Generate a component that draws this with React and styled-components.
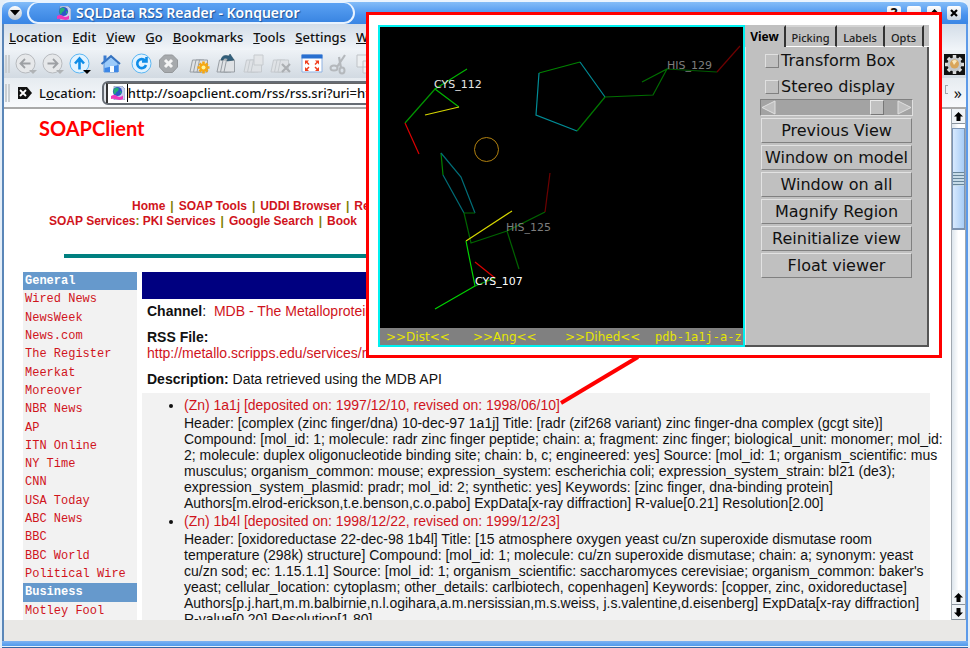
import React from "react";
import styled, { createGlobalStyle, css } from "styled-components";

const GlobalStyle = createGlobalStyle`
  * { box-sizing: border-box; }
  html, body { margin: 0; background: #fff; }
  button { font: inherit; color: inherit; padding: 0; border: 0; background: none; }
`;

const uiFont = `"Noto Sans", "Open Sans", sans-serif`;
const toolFont = `"DejaVu Sans", sans-serif`;
const pageFont = `"Liberation Sans", Arial, sans-serif`;

/* ---------- window frame ---------- */

const Window = styled.div`
  position: relative;
  display: flex;
  flex-direction: column;
  height: 100vh;
  overflow: hidden;
  padding: 0 2px;
  background: #e4eef8;
  font-family: ${uiFont};
  color: #111;
`;

const TitleBar = styled.header`
  display: flex;
  align-items: center;
  flex: none;
  height: 24px;
  padding: 0 7px 0 6px;
  border-top: 2px solid #eaf4fe;
  border-radius: 8px 8px 0 0;
  background: linear-gradient(#84bdf8, #4892ee 60%, #3a86e4);
`;

const RoundButton = styled.button`
  display: flex;
  width: 14px;
  height: 14px;
  border-radius: 50%;
  align-items: center;
  justify-content: center;
  background: linear-gradient(#fff, #b9c4cf);
`;

const TitlePill = styled.div`
  display: flex;
  align-items: center;
  gap: 5px;
  width: 328px;
  height: 22px;
  margin: 0 auto 0 5px;
  padding-left: 28px;
  border: 2px solid #e8f3ff;
  border-top-width: 1px;
  border-radius: 14px;
  background: linear-gradient(#5ba2f3, #3a85e2);
`;

const TitleText = styled.h1`
  margin: 0;
  font-size: 14px;
  line-height: 18px;
  font-weight: 600;
  color: #fff;
  text-shadow: 1px 1px 1px #1c4f96;
  white-space: nowrap;
`;

const FrameButton = styled.button`
  display: flex;
  align-items: center;
  justify-content: center;
  width: 14px;
  height: 14px;
  margin-left: 6px;
  border-radius: 2px;
  background: linear-gradient(#fff, #c9d4df);
  font-weight: 700;
  font-size: 14px;
  line-height: 14px;
`;

const FrameBody = styled.div`
  display: flex;
  flex: 1;
  min-height: 0;
  flex-direction: column;
  border-left: 2px solid #5a86b8;
  border-right: 2px solid #5d9ae8;
`;

const MenuBar = styled.nav`
  display: flex;
  flex: none;
  gap: 10px;
  height: 26px;
  padding: 0 5px;
  align-items: center;
  background: linear-gradient(#d3dde8, #f1f5f9);
`;

const MenuItem = styled.button`
  font-size: 13px;
  line-height: 18px;
  font-weight: 500;
  &::first-letter { text-decoration: underline; }
`;

const ToolBar = styled.div`
  display: flex;
  flex: none;
  align-items: center;
  gap: 5px;
  height: 28px;
  padding: 0 0 0 1px;
  background: linear-gradient(#eef2f6, #d2dae2);
`;

const Grip = styled.span`
  width: 5px;
  height: 18px;
  border-left: 2px solid #c9ced2;
  border-right: 2px solid #c9ced2;
`;

const ToolButton = styled.button`
  width: 22px;
  height: 22px;
  margin-left: ${(p) => (p.$apart ? "4px" : "0")};
  svg { display: block; }
`;

const GearBox = styled.span`
  width: 21px;
  height: 21px;
  margin: 0 1px 0 auto;
  background: #111;
  svg { display: block; }
`;

const LocationBar = styled.form`
  display: flex;
  flex: none;
  align-items: center;
  height: 29px;
  padding: 0 4px 0 1px;
  background: linear-gradient(#e6ebf0, #f8fafc);
`;

const ClearButton = styled.button`
  width: 16px;
  height: 14px;
  margin: 0 6px 0 7px;
  svg { display: block; }
`;

const LocationLabel = styled.label`
  margin-right: 6px;
  font-size: 13px;
  line-height: 18px;
  font-weight: 500;
`;

const AddressBox = styled.span`
  display: flex;
  flex: 1;
  align-items: center;
  height: 24px;
  padding: 0 4px 0 2px;
  border: 2px solid #666c74;
  border-radius: 6px;
  background: #dfe3e8;
`;

const AddressField = styled.span`
  display: flex;
  flex: 1;
  align-items: center;
  gap: 2px;
  height: 20px;
  padding-left: 3px;
  border-left: 2px solid #333;
  border-top: 1px solid #666;
  background: #fff;
`;

const AddressInput = styled.input`
  flex: 1;
  min-width: 0;
  height: 18px;
  padding: 0;
  border: 0;
  border-left: 1px solid #000;
  outline: 0;
  background: transparent;
  font: 500 13px/18px ${uiFont};
  color: #111;
`;

const AddressEnd = styled.span`
  width: 3px;
  height: 9px;
  margin: 0 6px 6px 8px;
  border: 1px solid #a0a4a8;
  border-right: 0;
`;

const MoreMark = styled.button`
  font-size: 16px;
  line-height: 18px;
`;

/* ---------- web page ---------- */

const Viewport = styled.div`
  display: flex;
  flex: 1;
  min-height: 0;
  border-top: 2px solid #a9a9a9;
  background: #fff;
`;

const Page = styled.div`
  display: flex;
  flex: 1;
  min-width: 0;
  flex-direction: column;
  overflow: hidden;
  font-family: ${pageFont};
`;

const SiteLogo = styled.div`
  margin: 7px 0 59px 35px;
  font-family: Lato, sans-serif;
  font-size: 20px;
  line-height: 24px;
  font-weight: 700;
  color: #f00;
`;

const NavLine = styled.nav`
  padding-left: ${(p) => (p.$inset ? "128px" : "45px")};
  font-size: 12px;
  line-height: 15px;
  font-weight: 700;
  color: #808000;
  white-space: nowrap;
`;

const Separator = styled.span`
  margin: 0 5px;
`;

const redLink = css`
  color: #d0141c;
  text-decoration: none;
`;

const Link = styled.a`${redLink}`;

const Rule = styled.hr`
  width: calc(100% - 120px);
  height: 4px;
  margin: 25px 60px 14px;
  border: 0;
  flex: none;
  background: #008080;
`;

const Columns = styled.div`
  display: flex;
  flex: 1;
  min-height: 0;
  gap: 5px;
  padding: 0 21px 0 19px;
`;

const Sidebar = styled.nav`
  display: grid;
  flex: none;
  width: 114px;
  grid-auto-rows: 1fr;
  background: #f2f2f2;
  font-family: "Liberation Mono", "Courier New", monospace;
  font-size: 12px;
  line-height: 18px;
`;

const SideHeading = styled.div`
  padding-left: 2px;
  background: #6699cc;
  color: #fff;
  font-weight: 700;
`;

const SideLink = styled.a`
  ${redLink}
  padding-left: 2px;
`;

const Main = styled.main`
  flex: 1;
  min-width: 0;
  font-size: 14px;
  line-height: 16px;
  color: #111;
  white-space: nowrap;
`;

const Banner = styled.div`
  height: 27px;
  background: #000080;
`;

const Field = styled.p`
  margin: 0 0 ${(p) => (p.$tight ? "6px" : "10px")} 5px;
`;

const FieldGroup = styled.div`
  padding-top: 4px;
`;

const Items = styled.ul`
  margin: 0;
  padding: 2px 0 0 42px;
  background: #f2f2f2;
`;

const ItemTitle = styled.a`
  ${redLink}
  display: block;
  line-height: 20px;
`;

/* ---------- vertical scrollbar ---------- */

const ScrollTrack = styled.div`
  display: flex;
  flex: none;
  width: 15px;
  flex-direction: column;
  border-left: 1px solid #a0a8b0;
  border-right: 1px solid #a0a8b0;
  background: linear-gradient(90deg, #dde5ec, #fff 50%);
`;

const ScrollButton = styled.button`
  display: flex;
  flex: none;
  justify-content: center;
  align-items: center;
  height: 15px;
  background: #eff3f7;
  border-bottom: 1px solid #8a949e;
`;

const ScrollThumb = styled.div`
  display: flex;
  align-items: center;
  height: 102px;
  margin-top: 4px;
  margin-bottom: auto;
  border: 1px solid #7b94b4;
  border-bottom: 2px solid #7d93b0;
  background: linear-gradient(90deg, #d8e9fd, #a8cdf6);
`;

const ThumbGrip = styled.span`
  width: 100%;
  height: 14px;
  background: repeating-linear-gradient(#66859a 0 1px, #c6dbe8 1px 3px);
`;

const StatusBar = styled.footer`
  flex: none;
  height: 21px;
  background: #e9e8e6;
`;

const BottomEdge = styled.div`
  flex: none;
  height: 7px;
  margin: 0 -2px;
  border-bottom: 1px solid #3465a4;
  background: linear-gradient(#7db2f2, #4f9aec 5px, #e8f2fc 5px);
`;

/* ---------- molecule viewer overlay ---------- */

const Callout = styled.section`
  position: absolute;
  top: 12px;
  left: 366px;
  right: 28px;
  display: flex;
  height: 346px;
  padding: 10px 10px 8px 9px;
  border: 3px solid #f00;
  background: #fff;
  font-family: ${toolFont};
`;

const Pointer = styled.svg`
  position: absolute;
  left: 556px;
  top: 355px;
`;

const Viewer = styled.div`
  display: flex;
  flex: 1;
  min-width: 0;
  flex-direction: column;
  border: 2px solid #00f0f0;
  background: #000;
`;

const Scene = styled.svg`
  display: block;
  flex: 1;
  width: 100%;
  min-height: 0;
`;

const ViewerBar = styled.div`
  display: grid;
  grid-template-columns: 87px 92px 90px 1fr;
  flex: none;
  height: 17px;
  padding-left: 6px;
  overflow: hidden;
  background: #808080;
  color: #e6e600;
  font-size: 12px;
  line-height: 18px;
  white-space: nowrap;
`;

const ViewerAction = styled.button`
  text-align: left;
`;

const ModelName = styled.span`
  font-family: "DejaVu Sans Mono", monospace;
`;

const Panel = styled.div`
  display: flex;
  flex: none;
  width: 184px;
  flex-direction: column;
  border-bottom: 2px solid #555;
  background: #c0c0c0;
`;

const Tabs = styled.div`
  display: flex;
  flex: none;
  height: 22px;
`;

const Tab = styled.button`
  width: ${(p) => p.$width}px;
  padding: 0 2px;
  font-family: ${uiFont};
  font-size: ${(p) => (p.$active ? "12px" : "11px")};
  line-height: ${(p) => (p.$active ? "20px" : "22px")};
  font-weight: ${(p) => (p.$active ? 700 : 500)};
  color: ${(p) => (p.$active ? "#000" : "#222")};
  border-right: 2px solid #333;
  border-bottom: ${(p) => (p.$active ? "0" : "1px solid #fff")};
  border-top: 2px solid ${(p) => (p.$active ? "#c0c0c0" : "#d4d4d4")};
  white-space: nowrap;
`;

const TabFill = styled.span`
  flex: 1;
  border-bottom: 1px solid #fff;
`;

const Controls = styled.div`
  display: flex;
  flex: 1;
  flex-direction: column;
  gap: 2px;
  padding: 0 15px;
  border-left: 1px solid #e4e4e4;
  border-right: 2px solid #555;
`;

const Check = styled.label`
  display: flex;
  align-items: center;
  gap: 2px;
  height: 24px;
  padding: 3px 0 0 4px;
  font-size: 16px;
  line-height: 20px;
  white-space: nowrap;
`;

const CheckInput = styled.input`
  appearance: none;
  width: 14px;
  height: 14px;
  margin: 0;
  border: 1px solid;
  border-color: #e0e0e0 #808080 #808080 #e0e0e0;
`;

const SliderRow = styled.div`
  display: flex;
  align-items: center;
  height: 17px;
  margin: 0 -1px;
  border: 1px solid;
  border-color: #808080 #e0e0e0 #e0e0e0 #808080;
  background: #a3a3a3;
  svg { display: block; }
`;

const Slider = styled.input`
  appearance: none;
  flex: 1;
  min-width: 0;
  height: 15px;
  margin: 0;
  background: transparent;
  &::-webkit-slider-thumb {
    appearance: none;
    width: 14px;
    height: 15px;
    border: 1px solid;
    border-color: #e8e8e8 #777 #777 #e8e8e8;
    background: #c0c0c0;
  }
`;

const PanelButton = styled.button`
  height: 25px;
  border: 1px solid;
  border-color: #e2e2e2 #808080 #808080 #e2e2e2;
  font-size: 16px;
  line-height: 20px;
  white-space: nowrap;
`;

/* ---------- icons ---------- */

const Globe = ({ size = 14 }) => (
  <svg width={size} height={size} viewBox="0 0 14 14">
    <path d="M3 0h8l3 3v11H3z" fill="#c9d3ee" stroke="#7786ac" strokeWidth=".6" />
    <circle cx="6.5" cy="5.5" r="4.6" fill="#2c56c8" />
    <path d="M3 3q3-3 5 0-1 3-3 3.500 0 2-2 1.500Q1.500 5 3 3m6 2 2 1-2 2z" fill="#23ae77" />
    <path d="M0 10q3-2 6 0t6-.5V13q-3 1.500-6 .5T0 13z" fill="#ee38bb" />
  </svg>
);

const Disc = ({ blue, d, menu }) => (
  <svg width="22" height="22" viewBox="0 0 22 22">
    <circle cx="10.500" cy="10.500" r="9.500" fill={blue ? "#e2f3ff" : "#e6e8ea"} stroke={blue ? "#5bb7f4" : "#b7babe"} />
    <path d={d} fill="none" stroke={blue ? "#0f8de8" : "#9da0a4"} strokeWidth={blue ? 2.6 : 1.8} />
    {menu && <path d="M14 17h8l-4 4z" fill={blue ? "#000" : "#b0b3b6"} />}
  </svg>
);

const Home = () => (
  <svg width="22" height="22" viewBox="0 0 22 22">
    <path d="M4 10 11 4l7 6v9H4z" fill="#9ccbfa" stroke="#5b95dc" />
    <path d="M4.500 19V15l14-3v7z" fill="#3c86e6" />
    <path d="M1.500 11 11 3l9 8" fill="none" stroke="#3673c0" strokeWidth="2" />
    <path d="M3.500 2.500h3V7l-3 2.500z" fill="#397bd0" />
    <path d="M10 13h4v6h-4z" fill="#f6fbff" />
  </svg>
);

const Stop = () => (
  <svg width="22" height="22" viewBox="0 0 22 22">
    <path d="M6.500 2h8l5 5v7l-5 5.500h-8l-5-5.500V7z" fill="#a6a9ac" stroke="#94979a" />
    <path d="m7 7 7 7m0-7-7 7" stroke="#f4f4f4" strokeWidth="3" />
  </svg>
);

const Pages = ({ kind }) => {
  const dim = kind === "dup" || kind === "close";
  const stroke = dim ? "#c2c6ca" : "#989ea4";
  return (
    <svg width="22" height="22" viewBox="0 0 22 22" opacity={dim ? 0.85 : 1}>
      {[0, 3.5, 7].map((x) => (
        <path key={x} d={`M${x + 1} 19 ${x + 3.500} 7h8v12z`} fill="#dfe2e5" stroke={stroke} />
      ))}
      {kind === "new" && (
        <path d="M14.500 8.500v12m-6-6h12m-10-4 8 8m0-8-8 8" stroke="#f5a712" strokeWidth="2.600" />
      )}
      {kind === "new" && <circle cx="14.500" cy="14.500" r="2" fill="#fff59a" />}
      {kind === "move" && (
        <path d="M5 7q1-6 8-4l1-2 4 6-7 1 1-2Q8 4 7 7z" fill="#315f7c" stroke="#244a62" strokeWidth=".6" />
      )}
      {kind === "dup" && <path d="M11 2h9v10h-9z" fill="#e3e5e7" stroke={stroke} />}
      {kind === "close" && <path d="m12 11 8 8m0-8-8 8" stroke="#a4a7aa" strokeWidth="2.200" />}
    </svg>
  );
};

const FullScreen = () => (
  <svg width="22" height="22" viewBox="0 0 22 22">
    <path d="M1 2h20v17H1z" fill="#fff" stroke="#8fb2e2" />
    <path d="M.5 1.500h21v4H.5z" fill="#286fd0" />
    <path d="M4 7.500h4l-4 4zm14 0h-4l4 4zM4 18h4l-4-4zm14 0h-4l4-4z" fill="#f04020" />
    <path d="m5 8.500 3 3m9-3-3 3m-9 5.500 3-3m9 3-3-3" stroke="#f04020" strokeWidth="1.500" />
  </svg>
);

const Scissors = () => (
  <svg width="22" height="22" viewBox="0 0 22 22" fill="none" stroke="#b4b8bc">
    <path d="M17 2 9 14M11 4l2 11" strokeWidth="2.200" />
    <ellipse cx="6" cy="15" rx="3.500" ry="2.500" strokeWidth="2" />
    <ellipse cx="14" cy="17.500" rx="2.500" ry="3" strokeWidth="2" />
  </svg>
);

const Copy = () => (
  <svg width="22" height="22" viewBox="0 0 22 22" fill="#eceff1" stroke="#bfc3c7">
    <path d="M2 2h11v12H2zM8 8h11v12H8z" />
  </svg>
);

const Gear = () => (
  <svg width="21" height="21" viewBox="0 0 21 21">
    <path
      d="M10.500 1v19M1 10.500h19M4 4l13 13M17 4 4 17"
      stroke="#dcdcdc"
      strokeWidth="3.500"
    />
    <circle cx="10.500" cy="10.500" r="7" fill="#c3c7cb" />
    <circle cx="10.500" cy="10" r="4.500" fill="#d9a55a" />
    <path d="M8 7q3-2 5 0l-3 4z" fill="#f9e8bd" />
  </svg>
);

const Arrow = ({ down }) => (
  <svg width="9" height="9" viewBox="0 0 9 9">
    <path d={down ? "M4.500 9 0 4.500h2.500V0h4v4.500H9z" : "M4.500 0 0 4.500h2.500V9h4V4.500H9z"} />
  </svg>
);

/* ---------- data ---------- */

const menus = ["Location", "Edit", "View", "Go", "Bookmarks", "Tools", "Settings", "Window"];

const tools = [
  { name: "Back", icon: <Disc menu d="M15.500 10.500H6m4-4.500-4.500 4.500L10 15" /> },
  { name: "Forward", icon: <Disc menu d="M5.500 10.500H15m-4-4.500 4.500 4.500L11 15" /> },
  { name: "Up", icon: <Disc blue menu d="M10.500 16.500V6m-4.500 4.500L10.500 5.500l4.500 5" /> },
  { name: "Home", icon: <Home />, apart: true },
  { name: "Reload", icon: <Disc blue d="M14 7.500A4.500 4.500 0 1 0 15 12M15.500 4v4.500H11" />, apart: true },
  { name: "Stop", icon: <Stop /> },
  { name: "New tab", icon: <Pages kind="new" />, apart: true },
  { name: "Detach tab", icon: <Pages kind="move" /> },
  { name: "Duplicate tab", icon: <Pages kind="dup" /> },
  { name: "Close tab", icon: <Pages kind="close" /> },
  { name: "Full screen", icon: <FullScreen />, apart: true },
  { name: "Cut", icon: <Scissors /> },
  { name: "Copy", icon: <Copy /> },
];

const feeds = [
  { heading: "General" },
  ..."Wired News,NewsWeek,News.com,The Register,Meerkat,Moreover,NBR News,AP,ITN Online,NY Time,CNN,USA Today,ABC News,BBC,BBC World,Political Wire"
    .split(",")
    .map((link) => ({ link })),
  { heading: "Business" },
  { link: "Motley Fool" },
];

const entries = [
  {
    title: "(Zn) 1a1j [deposited on: 1997/12/10, revised on: 1998/06/10]",
    lines: [
      "Header: [complex (zinc finger/dna) 10-dec-97 1a1j] Title: [radr (zif268 variant) zinc finger-dna complex (gcgt site)]",
      "Compound: [mol_id: 1; molecule: radr zinc finger peptide; chain: a; fragment: zinc finger; biological_unit: monomer; mol_id:",
      "2; molecule: duplex oligonucleotide binding site; chain: b, c; engineered: yes] Source: [mol_id: 1; organism_scientific: mus",
      "musculus; organism_common: mouse; expression_system: escherichia coli; expression_system_strain: bl21 (de3);",
      "expression_system_plasmid: pradr; mol_id: 2; synthetic: yes] Keywords: [zinc finger, dna-binding protein]",
      "Authors[m.elrod-erickson,t.e.benson,c.o.pabo] ExpData[x-ray diffraction] R-value[0.21] Resolution[2.00]",
    ],
  },
  {
    title: "(Zn) 1b4l [deposited on: 1998/12/22, revised on: 1999/12/23]",
    lines: [
      "Header: [oxidoreductase 22-dec-98 1b4l] Title: [15 atmosphere oxygen yeast cu/zn superoxide dismutase room",
      "temperature (298k) structure] Compound: [mol_id: 1; molecule: cu/zn superoxide dismutase; chain: a; synonym: yeast",
      "cu/zn sod; ec: 1.15.1.1] Source: [mol_id: 1; organism_scientific: saccharomyces cerevisiae; organism_common: baker's",
      "yeast; cellular_location: cytoplasm; other_details: carlbiotech, copenhagen] Keywords: [copper, zinc, oxidoreductase]",
      "Authors[p.j.hart,m.m.balbirnie,n.l.ogihara,a.m.nersissian,m.s.weiss, j.s.valentine,d.eisenberg] ExpData[x-ray diffraction]",
      "R-value[0.20] Resolution[1.80]",
    ],
  },
];

const bonds = [
  ["#00b400", "467,69 435,89 459,107"],
  ["#d8d800", "459,107 425,115"],
  ["#009600", "435,89 405,123"],
  ["#dc0000", "405,123 419,154"],
  ["#008200", "539,73 580,62"],
  ["#008c96", "580,62 605,97"],
  ["#007800", "605,97 577,131"],
  ["#008c96", "577,131 536,115 539,73"],
  ["#006e00", "605,97 653,95 667,69 642,82"],
  ["#005a00", "667,69 717,72"],
  ["#6e0000", "717,72 740,46"],
  ["#008200", "441,153 443,175"],
  ["#006e78", "443,175 464,213"],
  ["#006e78", "441,153 461,177 475,213"],
  ["#006400", "475,213 464,213 471,243 507,231 545,212"],
  ["#6e0000", "545,212 550,173"],
  ["#006400", "507,231 519,269"],
  ["#d8d800", "512,211 466,241"],
  ["#00d200", "466,241 475,286 435,309"],
  ["#00a000", "475,286 495,278"],
  ["#dc0000", "495,278 475,262"],
];

const atoms = [
  ["CYS_112", 434, 88, "#e6e6e6"],
  ["HIS_129", 667, 69, "#7d7d7d"],
  ["HIS_125", 506, 231, "#7d7d7d"],
  ["CYS_107", 475, 285, "#fff"],
];

const Molecule = () => (
  <Scene viewBox="380 27 363 301" fill="none" role="img" aria-label="Metal binding site">
    {bonds.map(([color, points]) => (
      <polyline key={color + points} points={points} stroke={color} strokeWidth="1.2" />
    ))}
    <circle cx="486.500" cy="149.500" r="12" stroke="#b08010" />
    {atoms.map(([name, x, y, fill]) => (
      <text key={name} x={x} y={y} fill={fill} fontSize="11" fontFamily="DejaVu Sans, sans-serif">
        {name}
      </text>
    ))}
  </Scene>
);

const tabs = [
  ["View", 41],
  ["Picking", 51],
  ["Labels", 48],
  ["Opts", 39],
];

const actions = [
  "Previous View",
  "Window on model",
  "Window on all",
  "Magnify Region",
  "Reinitialize view",
  "Float viewer",
];

const ViewerCallout = () => (
  <Callout>
    <Viewer>
      <Molecule />
      <ViewerBar>
        {[">>Dist<<", ">>Ang<<", ">>Dihed<<"].map((t) => (
          <ViewerAction key={t}>{t}</ViewerAction>
        ))}
        <ModelName>pdb-1a1j-a-z</ModelName>
      </ViewerBar>
    </Viewer>
    <Panel>
      <Tabs role="tablist">
        {tabs.map(([t, w], i) => (
          <Tab key={t} role="tab" aria-selected={i === 0} $active={i === 0} $width={w}>
            {t}
          </Tab>
        ))}
        <TabFill />
      </Tabs>
      <Controls>
        <Check>
          <CheckInput type="checkbox" />
          Transform Box
        </Check>
        <Check>
          <CheckInput type="checkbox" />
          Stereo display
        </Check>
        <SliderRow>
          <svg width="15" height="15"><path d="M14 1v13L1 7.500z" fill="#c0c0c0" stroke="#e0e0e0" /></svg>
          <Slider type="range" min="0" max="100" defaultValue="88" aria-label="Clipping" />
          <svg width="15" height="15"><path d="M1 1v13l13-6.500z" fill="#c0c0c0" stroke="#e0e0e0" /></svg>
        </SliderRow>
        {actions.map((a) => (
          <PanelButton key={a}>{a}</PanelButton>
        ))}
      </Controls>
    </Panel>
  </Callout>
);

const NavLinks = ({ names }) =>
  names.map((n, i) => (
    <React.Fragment key={n}>
      {i > 0 && <Separator>|</Separator>}
      <Link href="#">{n}</Link>
    </React.Fragment>
  ));

export default function App() {
  return (
    <Window>
      <GlobalStyle />
      <TitleBar>
        <RoundButton aria-label="Window menu">
          <svg width="10" height="6"><path d="M0 0h10L5 5.500z" /></svg>
        </RoundButton>
        <TitlePill>
          <Globe />
          <TitleText>SQLData RSS Reader - Konqueror</TitleText>
        </TitlePill>
        <FrameButton>?</FrameButton>
        <FrameButton aria-label="Minimize" />
        <FrameButton aria-label="Maximize"><Arrow /></FrameButton>
        <FrameButton aria-label="Close">
          <svg width="8" height="8"><path d="m1 1 6 6m0-6-6 6" stroke="#000" strokeWidth="2.200" /></svg>
        </FrameButton>
      </TitleBar>
      <FrameBody>
        <MenuBar>
          {menus.map((m) => (
            <MenuItem key={m}>{m}</MenuItem>
          ))}
        </MenuBar>
        <ToolBar>
          <Grip />
          {tools.map((t) => (
            <ToolButton key={t.name} aria-label={t.name} $apart={t.apart}>
              {t.icon}
            </ToolButton>
          ))}
          <GearBox><Gear /></GearBox>
        </ToolBar>
        <LocationBar onSubmit={(e) => e.preventDefault()}>
          <Grip />
          <ClearButton type="button" aria-label="Clear location">
            <svg width="16" height="14">
              <path d="M1 1h9l5 6-5 6H1z" fill="#111" />
              <path d="m3 4 6 6m0-6-6 6" stroke="#fff" strokeWidth="1.800" />
            </svg>
          </ClearButton>
          <LocationLabel htmlFor="address">
            L<u>o</u>cation:
          </LocationLabel>
          <AddressBox>
            <AddressField>
              <Globe />
              <AddressInput id="address" defaultValue="http://soapclient.com/rss/rss.sri?uri=http" />
            </AddressField>
          </AddressBox>
          <AddressEnd />
          <MoreMark type="button">»</MoreMark>
        </LocationBar>
        <Viewport>
          <Page>
            <SiteLogo>SOAPClient</SiteLogo>
            <NavLine $inset>
              <NavLinks names={["Home", "SOAP Tools", "UDDI Browser", "Re"]} />
            </NavLine>
            <NavLine>
              <Link href="#">SOAP Services</Link>: <NavLinks names={["PKI Services", "Google Search", "Book"]} />
            </NavLine>
            <Rule />
            <Columns>
              <Sidebar>
                {feeds.map((f) =>
                  f.heading ? (
                    <SideHeading key={f.heading}>{f.heading}</SideHeading>
                  ) : (
                    <SideLink key={f.link} href="#">{f.link}</SideLink>
                  )
                )}
              </Sidebar>
              <Main>
                <Banner />
                <FieldGroup>
                  <Field>
                    <b>Channel</b>:&nbsp; <Link href="#">MDB - The Metalloprotein</Link>
                  </Field>
                  <Field>
                    <b>RSS File:</b>
                    <br />
                    <Link href="#">http://metallo.scripps.edu/services/r</Link>
                  </Field>
                  <Field $tight>
                    <b>Description:</b> Data retrieved using the MDB API
                  </Field>
                </FieldGroup>
                <Items>
                  {entries.map((e) => (
                    <li key={e.title}>
                      <ItemTitle href="#">{e.title}</ItemTitle>
                      {e.lines.map((l) => (
                        <React.Fragment key={l}>
                          {l}
                          <br />
                        </React.Fragment>
                      ))}
                    </li>
                  ))}
                </Items>
              </Main>
            </Columns>
          </Page>
          <ScrollTrack>
            <ScrollButton aria-label="Scroll up"><Arrow /></ScrollButton>
            <ScrollThumb><ThumbGrip /></ScrollThumb>
            <ScrollButton aria-label="Page up"><Arrow /></ScrollButton>
            <ScrollButton aria-label="Scroll down"><Arrow down /></ScrollButton>
          </ScrollTrack>
        </Viewport>
        <StatusBar />
        <BottomEdge />
      </FrameBody>
      <ViewerCallout />
      <Pointer width="84" height="50" viewBox="0 0 84 50">
        <path d="M82 2 5 48" stroke="#f00" strokeWidth="4" />
      </Pointer>
    </Window>
  );
}
